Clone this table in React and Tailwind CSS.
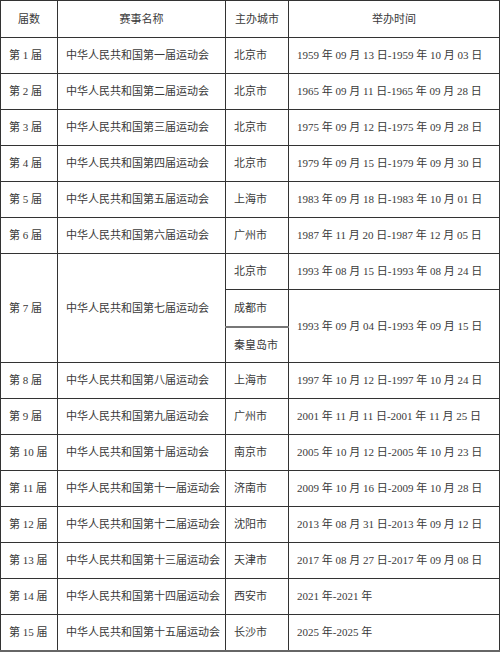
import React from "react";

const rows = [
  ["第 1 届", "中华人民共和国第一届运动会", "北京市", "1959 年 09 月 13 日-1959 年 10 月 03 日"],
  ["第 2 届", "中华人民共和国第二届运动会", "北京市", "1965 年 09 月 11 日-1965 年 09 月 28 日"],
  ["第 3 届", "中华人民共和国第三届运动会", "北京市", "1975 年 09 月 12 日-1975 年 09 月 28 日"],
  ["第 4 届", "中华人民共和国第四届运动会", "北京市", "1979 年 09 月 15 日-1979 年 09 月 30 日"],
  ["第 5 届", "中华人民共和国第五届运动会", "上海市", "1983 年 09 月 18 日-1983 年 10 月 01 日"],
  ["第 6 届", "中华人民共和国第六届运动会", "广州市", "1987 年 11 月 20 日-1987 年 12 月 05 日"],
];

const rowsAfter = [
  ["第 8 届", "中华人民共和国第八届运动会", "上海市", "1997 年 10 月 12 日-1997 年 10 月 24 日"],
  ["第 9 届", "中华人民共和国第九届运动会", "广州市", "2001 年 11 月 11 日-2001 年 11 月 25 日"],
  ["第 10 届", "中华人民共和国第十届运动会", "南京市", "2005 年 10 月 12 日-2005 年 10 月 23 日"],
  ["第 11 届", "中华人民共和国第十一届运动会", "济南市", "2009 年 10 月 16 日-2009 年 10 月 28 日"],
  ["第 12 届", "中华人民共和国第十二届运动会", "沈阳市", "2013 年 08 月 31 日-2013 年 09 月 12 日"],
  ["第 13 届", "中华人民共和国第十三届运动会", "天津市", "2017 年 08 月 27 日-2017 年 09 月 08 日"],
  ["第 14 届", "中华人民共和国第十四届运动会", "西安市", "2021 年-2021 年"],
  ["第 15 届", "中华人民共和国第十五届运动会", "长沙市", "2025 年-2025 年"],
];

const td = "border border-[#333] pl-2 pr-0 text-left align-middle whitespace-nowrap";
const th = "border border-[#333] px-1 text-center align-middle font-normal whitespace-nowrap";

function Row({ r }) {
  return (
    <tr className="h-[36px]">
      {r.map((c, i) => (
        <td key={i} className={td}>{c}</td>
      ))}
    </tr>
  );
}

export default function App() {
  return (
    <div className="w-[500px] h-[652px] bg-white">
      <table
        className="border-collapse table-fixed w-[499px] text-[11px] text-[#3a3a3a] border-b-2 border-b-[#666]"
        style={{ fontFamily: '"Liberation Serif", "Noto Sans CJK SC", serif' }}
      >
        <colgroup>
          <col className="w-[57px]" />
          <col className="w-[168px]" />
          <col className="w-[63px]" />
          <col className="w-[211px]" />
        </colgroup>
        <thead>
          <tr className="h-[37px]">
            <th className={th}>届数</th>
            <th className={th}>赛事名称</th>
            <th className={th}>主办城市</th>
            <th className={th}>举办时间</th>
          </tr>
        </thead>
        <tbody>
          {rows.map((r) => (
            <Row key={r[0]} r={r} />
          ))}
          <tr className="h-[36px]">
            <td rowSpan={3} className={td}>第 7 届</td>
            <td rowSpan={3} className={td}>中华人民共和国第七届运动会</td>
            <td className={td}>北京市</td>
            <td className={td}>1993 年 08 月 15 日-1993 年 08 月 24 日</td>
          </tr>
          <tr className="h-[37px]">
            <td className={`${td} border-b-2 border-b-[#777]`}>成都市</td>
            <td rowSpan={2} className={td}>1993 年 09 月 04 日-1993 年 09 月 15 日</td>
          </tr>
          <tr className="h-[36px]">
            <td className={td}>秦皇岛市</td>
          </tr>
          {rowsAfter.map((r) => (
            <Row key={r[0]} r={r} />
          ))}
        </tbody>
      </table>
    </div>
  );
}
